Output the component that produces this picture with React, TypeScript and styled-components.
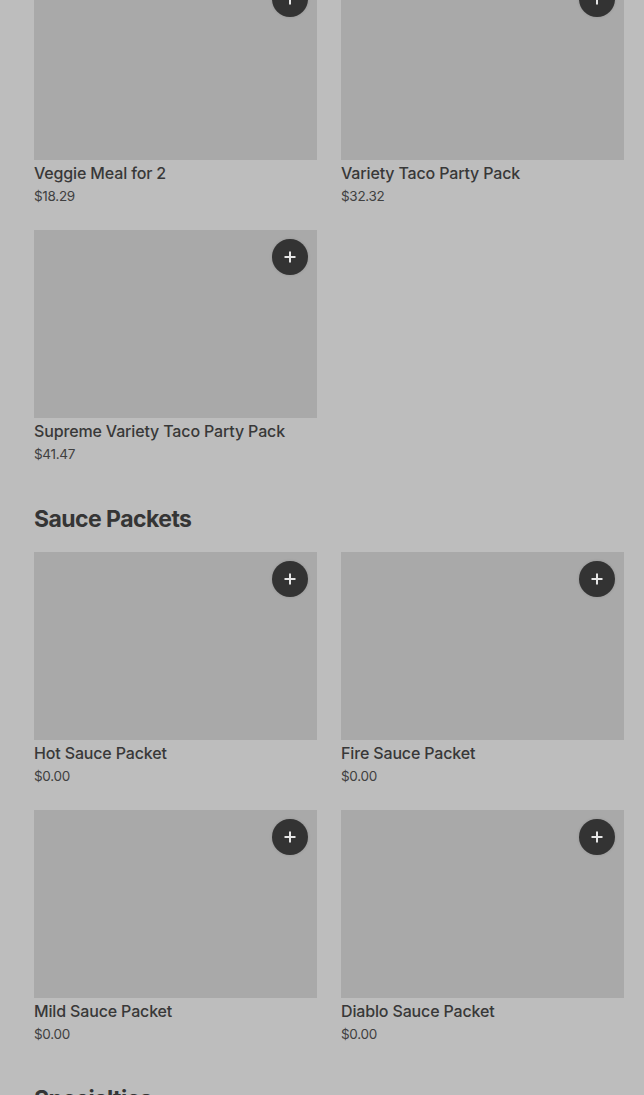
import React from "react";
import styled, { createGlobalStyle } from "styled-components";

const Global = createGlobalStyle`
  html, body { margin: 0; padding: 0; background: #bdbdbd; }
  body { font-family: Inter, "Noto Sans", "Liberation Sans", sans-serif; color: #363636; overflow: hidden; }
`;

const Page = styled.div`
  padding: 0 20px 0 34px;
  margin-top: -28px;
`;

const Section = styled.section`
  & + & { padding-top: 40px; }
`;

const Heading = styled.h2`
  margin: 0 0 18px;
  font-size: 23px;
  line-height: 30px;
  font-weight: 700;
  letter-spacing: -0.55px;
  color: #353535;
`;

const Grid = styled.div`
  display: grid;
  grid-template-columns: repeat(2, 1fr);
  column-gap: 24px;
  row-gap: 24px;
`;

const Card = styled.div`
  display: flex;
  flex-direction: column;
`;

const Thumb = styled.div`
  position: relative;
  height: 188px;
  background: #a9a9a9;
`;

const AddButton = styled.button`
  position: absolute;
  top: 9px;
  right: 9px;
  width: 36px;
  height: 36px;
  border-radius: 50%;
  border: none;
  padding: 0;
  background: #333333;
  box-shadow: 0 0 3px rgba(0,0,0,0.15);
  display: flex;
  align-items: center;
  justify-content: center;
`;

const Name = styled.div`
  padding-top: 1px;
  font-size: 16px;
  line-height: 24px;
  font-weight: 500;
  letter-spacing: -0.15px;
  color: #383838;
`;

const Price = styled.div`
  padding-top: 1px;
  font-size: 13.5px;
  line-height: 20px;
  color: #404040;
  letter-spacing: -0.3px;
`;

const Plus = () => (
  <svg width="14" height="14" viewBox="0 0 14 14">
    <path d="M7 1.5v11M1.5 7h11" stroke="#e6e6e6" strokeWidth="2" />
  </svg>
);

type Item = { name: string; price: string };

const Product = ({ item }: { item: Item }) => (
  <Card>
    <Thumb>
      <AddButton aria-label="Add">
        <Plus />
      </AddButton>
    </Thumb>
    <Name>{item.name}</Name>
    <Price>{item.price}</Price>
  </Card>
);

const sections: { title?: string; items: Item[] }[] = [
  {
    items: [
      { name: "Veggie Meal for 2", price: "$18.29" },
      { name: "Variety Taco Party Pack", price: "$32.32" },
      { name: "Supreme Variety Taco Party Pack", price: "$41.47" },
    ],
  },
  {
    title: "Sauce Packets",
    items: [
      { name: "Hot Sauce Packet", price: "$0.00" },
      { name: "Fire Sauce Packet", price: "$0.00" },
      { name: "Mild Sauce Packet", price: "$0.00" },
      { name: "Diablo Sauce Packet", price: "$0.00" },
    ],
  },
  {
    title: "Specialties",
    items: [
      { name: "Mexican Pizza", price: "$5.49" },
      { name: "Crunchwrap Supreme", price: "$5.69" },
    ],
  },
];

export default function App() {
  return (
    <>
      <Global />
      <Page>
        {sections.map((s, i) => (
          <Section key={i}>
            {s.title && <Heading>{s.title}</Heading>}
            <Grid>
              {s.items.map((it) => (
                <Product key={it.name} item={it} />
              ))}
            </Grid>
          </Section>
        ))}
      </Page>
    </>
  );
}
